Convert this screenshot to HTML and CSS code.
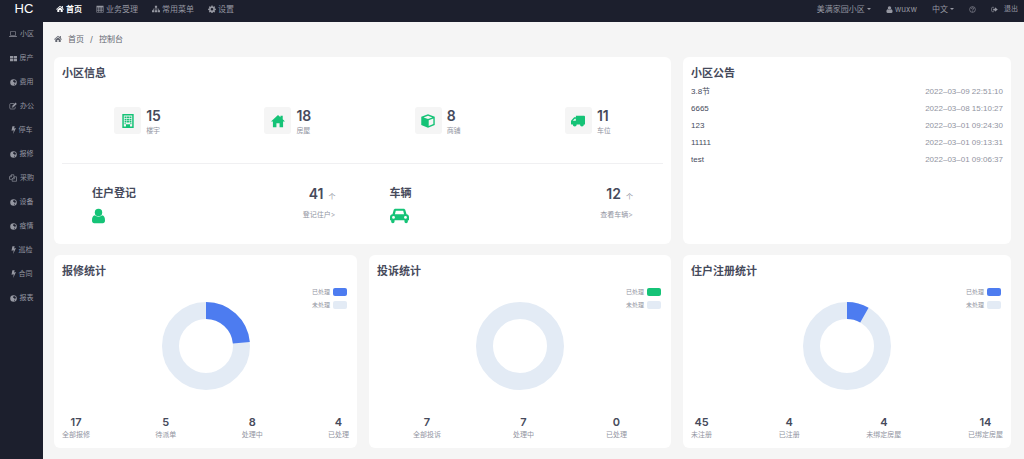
FILE: index.html
```html
<!DOCTYPE html>
<html lang="zh-CN">
<head>
<meta charset="utf-8">
<title>控制台</title>
<link rel="stylesheet" href="styles.css">
</head>
<body>
<svg class="sprite" aria-hidden="true">
  <symbol id="home" viewBox="0 0 16 16"><path d="M8 1.500 0 8.300l1 1.100L8 3.600l7 5.800 1-1.100-2.300-2V2h-2.200v2.400zM8 4.800 2.600 9.200V14h4V10h2.800v4h4V9.200z"/></symbol>
  <symbol id="house" viewBox="0 0 16 16"><path d="M8 1 0 8.600h2.200V15h4V10.500h3.600V15h4V8.600H16l-2.600-2.500V2h-2.600v1.600z"/></symbol>
  <symbol id="calendar" viewBox="0 0 16 16"><path fill-rule="evenodd" d="M1 1.500h14V15H1zM2.200 5v2.400h2.600V5zm3.700 0v2.400h1.800V5zm2.800 0v2.400h1.800V5zm2.800 0v2.400h2.300V5zM2.200 8.400v2.200h2.600V8.400zm3.700 0v2.200h1.800V8.400zm2.800 0v2.200h1.800V8.400zm2.800 0v2.200h2.300V8.400zM2.200 11.600v2.200h2.600v-2.200zm3.700 0v2.200h1.800v-2.200zm2.800 0v2.200h1.800v-2.200zm2.800 0v2.200h2.300v-2.200z"/></symbol>
  <symbol id="sitemap" viewBox="0 0 16 16"><path d="M5.800 1.500h4.400v4H8.600V7.500h5.500v3H16v4h-4.500v-4h1.400V8.700H8.600v1.800h1.700v4H5.700v-4h1.700V8.700H3.100v1.800h1.400v4H0v-4h1.900v-3h5.500v-2H5.800z"/></symbol>
  <symbol id="gear" viewBox="0 0 16 16"><path fill-rule="evenodd" d="M6.800 1h2.400l.4 2 1.400.6 1.700-1.200 1.700 1.700-1.200 1.700.6 1.400 2 .4v2.400l-2 .4-.6 1.400 1.200 1.700-1.700 1.700-1.700-1.200-1.400.6-.4 2H6.800l-.4-2-1.400-.6-1.700 1.200-1.700-1.700 1.200-1.700-.6-1.400-2-.4V7.600l2-.4.6-1.400-1.200-1.700 1.700-1.700L5 3.600 6.400 3zM8 6a2.600 2.600 0 1 0 0 5.200A2.600 2.600 0 0 0 8 6z"/></symbol>
  <symbol id="user" viewBox="1 0 14 16"><circle cx="8" cy="4.300" r="4"/><path d="M4.300 7.200c2.100 2.100 5.300 2.100 7.400 0 2.600.3 3.300 2.800 3.300 5.600 0 1.900-1 3-2.400 3H3.400c-1.400 0-2.400-1.100-2.400-3 0-2.800.7-5.300 3.300-5.600z"/></symbol>
  <symbol id="help" viewBox="0 0 16 16"><circle cx="8" cy="8" r="6.600" fill="none" stroke="currentColor" stroke-width="1.400"/><path d="M5.600 6.400C5.800 3.300 10.600 3.500 10.500 6.200 10.500 7.900 8 7.900 8 9.600" fill="none" stroke="currentColor" stroke-width="1.600"/><path d="M7.100 10.700h1.800v1.700H7.100z"/></symbol>
  <symbol id="logout" viewBox="0 0 16 16"><path d="M6.500 3H3.500C2.200 3 1.500 3.800 1.500 5v6c0 1.200.7 2 2 2h3" fill="none" stroke="currentColor" stroke-width="1.600"/><path d="M5 6h4V2.800L15.500 8 9 13.200V10H5z"/></symbol>
  <symbol id="laptop" viewBox="0 0 16 16"><path fill-rule="evenodd" d="M3.500 2.500h9c.8 0 1.300.5 1.300 1.300V11H2.200V3.800c0-.8.500-1.300 1.300-1.300zM3.400 3.700v6.200h9.200V3.700zM0 11.800h16v.7c0 .7-.8 1.200-1.800 1.200H1.800C.8 13.700 0 13.200 0 12.500z"/></symbol>
  <symbol id="grid" viewBox="0 0 16 16"><path d="M0 2h7.300v5.500H0zm8.700 0H16v5.500H8.700zM0 8.700h7.300v5.500H0zm8.700 0H16v5.500H8.700z"/></symbol>
  <symbol id="globe" viewBox="0 0 16 16"><path fill-rule="evenodd" d="M8 .5a7.500 7.500 0 1 0 0 15 7.500 7.500 0 0 0 0-15zm.8 2 3.400 1.200 1.600 3.100-1 1.400-2.600.3-1.400-1.600-1.800-.8.400-1.900zM9.800 10.800l2-.2-.6 2-1.800 1z"/></symbol>
  <symbol id="edit" viewBox="0 0 16 16"><path d="M10 3H3.500C2.300 3 1.500 3.800 1.500 5v7c0 1.200.8 2 2 2h7c1.200 0 2-.8 2-2V9.500" fill="none" stroke="currentColor" stroke-width="1.300"/><path fill-rule="evenodd" d="m13 1.200 2.600 2.600L8.200 11H5.700V8.500zM7 9v1h1l.7-.7-1-1z"/></symbol>
  <symbol id="bolt" viewBox="3 0 10 16"><path d="M5.800.5h4.600L9 5l4-.8L7.300 16l1.200-7.500-4.500 1z"/></symbol>
  <symbol id="copy" viewBox="0 0 16 16"><path d="M5.200 1.500h4.500v4M5.200 1.500 1 5.500v5.200h4.500M5.200 1.500v4H1M10.700 5.500H15v9H6.300V9.700zm0 0v4.200H6.300" fill="none" stroke="currentColor" stroke-width="1.300"/></symbol>
  <symbol id="building" viewBox="0 0 16 16"><path fill-rule="evenodd" d="M1.500 0h13v16h-13zM3.200 1.800v12.400h2.500v-2.400h4.600v2.400h2.500V1.800z"/><path d="M4.100 2.800h2.200v1.900H4.100zm2.800 0h2.200v1.900H6.900zm2.800 0h2.200v1.900H9.700zM4.100 5.300h2.200v1.900H4.100zm2.800 0h2.200v1.900H6.900zm2.800 0h2.200v1.900H9.700zM4.100 7.800h2.200v1.900H4.100zm2.800 0h2.200v1.900H6.900zm2.800 0h2.200v1.900H9.700zM4.100 10.300h1.200v1.500H4.100zm6.600 0h1.200v1.500h-1.200zM7 12.800h2V15H7z"/></symbol>
  <symbol id="cube" viewBox="0 0 16 16"><path fill-rule="evenodd" d="M8 .4 15.700 3.200v9.300L8 15.800.3 12.500V3.200zM8 2 3 3.900 8 5.800l5-1.900zm.8 5.200v6.500l5.300-2.300V5.200z"/></symbol>
  <symbol id="truck" viewBox="0 0 16 16"><path fill-rule="evenodd" d="M5.600 2H15c.6 0 1 .4 1 1v9h-1.300a2.200 2.200 0 0 1-4.400 0H6.500a2.200 2.200 0 0 1-4.400 0H.5c-.3 0-.5-.2-.5-.5V8.200c0-.5.200-.9.500-1.200l2.600-2.700c.3-.3.700-.5 1.100-.5h1.400zM2 7.800h3.500V5.300H4.400z"/></symbol>
  <symbol id="car" viewBox="0 0 20 16"><path fill-rule="evenodd" d="M5.800.4h8.400c1 0 1.700.6 2 1.500l1.200 4.300c1.500.2 2.600 1.300 2.600 2.800v3.500h-1.200v1.300a1.800 1.800 0 0 1-3.600 0v-1.300H4.800v1.300a1.800 1.800 0 0 1-3.600 0v-1.300H0V9c0-1.500 1.100-2.600 2.600-2.800l1.200-4.300c.3-.9 1-1.500 2-1.500zm.3 2L5.200 6.100h9.600l-.9-3.700zM3.700 8a1.500 1.500 0 1 0 0 3 1.500 1.500 0 0 0 0-3zm12.600 0a1.500 1.500 0 1 0 0 3 1.500 1.500 0 0 0 0-3z"/></symbol>
</svg>

<header class="topbar">
  <a class="logo" href="#">HC</a>
  <nav class="menu">
    <a class="menu-link active" href="#"><svg class="icon"><use href="#home"/></svg>首页</a>
    <a class="menu-link" href="#"><svg class="icon"><use href="#calendar"/></svg>业务受理</a>
    <a class="menu-link" href="#"><svg class="icon"><use href="#sitemap"/></svg>常用菜单</a>
    <a class="menu-link" href="#"><svg class="icon"><use href="#gear"/></svg>设置</a>
  </nav>
  <div class="tools">
    <button class="tool" type="button">美满家园小区<span class="caret"></span></button>
    <a class="tool" href="#"><svg class="icon small"><use href="#user"/></svg>wuxw</a>
    <button class="tool" type="button">中文<span class="caret"></span></button>
    <a class="tool" href="#" aria-label="帮助"><svg class="icon small"><use href="#help"/></svg></a>
    <a class="tool spaced" href="#"><svg class="icon small"><use href="#logout"/></svg>退出</a>
  </div>
</header>

<div class="shell">
  <nav class="sidebar">
    <a href="#"><svg class="icon"><use href="#laptop"/></svg>小区</a>
    <a href="#"><svg class="icon small"><use href="#grid"/></svg>房产</a>
    <a href="#"><svg class="icon small"><use href="#globe"/></svg>费用</a>
    <a href="#"><svg class="icon"><use href="#edit"/></svg>办公</a>
    <a href="#"><svg class="icon narrow"><use href="#bolt"/></svg>停车</a>
    <a href="#"><svg class="icon small"><use href="#globe"/></svg>报修</a>
    <a href="#"><svg class="icon"><use href="#copy"/></svg>采购</a>
    <a href="#"><svg class="icon small"><use href="#globe"/></svg>设备</a>
    <a href="#"><svg class="icon small"><use href="#globe"/></svg>疫情</a>
    <a href="#"><svg class="icon narrow"><use href="#bolt"/></svg>巡检</a>
    <a href="#"><svg class="icon narrow"><use href="#bolt"/></svg>合同</a>
    <a href="#"><svg class="icon small"><use href="#globe"/></svg>报表</a>
  </nav>

  <main class="main">
    <nav class="breadcrumb">
      <svg class="icon"><use href="#home"/></svg><a href="#">首页</a><span>/</span><span>控制台</span>
    </nav>

    <div class="board">
      <section class="card wide">
        <h2>小区信息</h2>
        <div class="facts">
          <div class="fact"><span class="tile"><svg class="icon"><use href="#building"/></svg></span><div><strong>15</strong><small>楼宇</small></div></div>
          <div class="fact"><span class="tile"><svg class="icon"><use href="#house"/></svg></span><div><strong>18</strong><small>房屋</small></div></div>
          <div class="fact"><span class="tile"><svg class="icon"><use href="#cube"/></svg></span><div><strong>8</strong><small>商铺</small></div></div>
          <div class="fact"><span class="tile"><svg class="icon"><use href="#truck"/></svg></span><div><strong>11</strong><small>车位</small></div></div>
        </div>
        <div class="records">
          <div class="record">
            <div><h3>住户登记</h3><svg class="badge"><use href="#user"/></svg></div>
            <div class="record-end"><p><strong>41</strong>个</p><a href="#">登记住户&gt;</a></div>
          </div>
          <div class="record">
            <div><h3>车辆</h3><svg class="badge car"><use href="#car"/></svg></div>
            <div class="record-end"><p><strong>12</strong>个</p><a href="#">查看车辆&gt;</a></div>
          </div>
        </div>
      </section>

      <section class="card">
        <h2>小区公告</h2>
        <ul class="notices">
          <li><span>3.8节</span><time>2022–03–09 22:51:10</time></li>
          <li><span>6665</span><time>2022–03–08 15:10:27</time></li>
          <li><span>123</span><time>2022–03–01 09:24:30</time></li>
          <li><span>11111</span><time>2022–03–01 09:13:31</time></li>
          <li><span>test</span><time>2022–03–01 09:06:37</time></li>
        </ul>
      </section>

      <section class="card">
        <h2>报修统计</h2>
        <div class="chart">
          <svg class="donut" viewBox="0 0 88 88"><circle class="rest" cx="44" cy="44" r="35.500"/><circle class="done" cx="44" cy="44" r="35.500" pathLength="17" stroke-dasharray="4 13" transform="rotate(-90 44 44)"/></svg>
          <ul class="legend"><li>已处理<i class="blue"></i></li><li>未处理<i></i></li></ul>
        </div>
        <dl class="totals">
          <div><dt>全部报修</dt><dd>17</dd></div><div><dt>待派单</dt><dd>5</dd></div><div><dt>处理中</dt><dd>8</dd></div><div><dt>已处理</dt><dd>4</dd></div>
        </dl>
      </section>

      <section class="card">
        <h2>投诉统计</h2>
        <div class="chart">
          <svg class="donut" viewBox="0 0 88 88"><circle class="rest" cx="44" cy="44" r="35.500"/></svg>
          <ul class="legend"><li>已处理<i class="green"></i></li><li>未处理<i></i></li></ul>
        </div>
        <dl class="totals around">
          <div><dt>全部投诉</dt><dd>7</dd></div><div><dt>处理中</dt><dd>7</dd></div><div><dt>已处理</dt><dd>0</dd></div>
        </dl>
      </section>

      <section class="card">
        <h2>住户注册统计</h2>
        <div class="chart">
          <svg class="donut" viewBox="0 0 88 88"><circle class="rest" cx="44" cy="44" r="35.500"/><circle class="done" cx="44" cy="44" r="35.500" pathLength="49" stroke-dasharray="4 45" transform="rotate(-90 44 44)"/></svg>
          <ul class="legend"><li>已处理<i class="blue"></i></li><li>未处理<i></i></li></ul>
        </div>
        <dl class="totals">
          <div><dt>未注册</dt><dd>45</dd></div><div><dt>已注册</dt><dd>4</dd></div><div><dt>未绑定房屋</dt><dd>4</dd></div><div><dt>已绑定房屋</dt><dd>14</dd></div>
        </dl>
      </section>
    </div>
  </main>
</div>
</body>
</html>
```
FILE: styles.css
```css
:root {
  --dark: #1c1f2d;
  --page: #f5f5f5;
  --ink: #464a5b;
  --muted: #9194a1;
  --green: #15c377;
  --blue: #4d7cf0;
  --pale: #e3ebf5;
}

* { box-sizing: border-box; }

body {
  margin: 0;
  min-height: 100vh;
  display: flex;
  flex-direction: column;
  background: var(--page);
  color: var(--ink);
  font: 8px/12px Inter, "Noto Sans CJK SC", sans-serif;
}

h2, h3, p, ul, dl, dd { margin: 0; padding: 0; }
ul { list-style: none; }
a { color: inherit; text-decoration: none; }
button { border: 0; padding: 0; background: none; color: inherit; font: inherit; cursor: pointer; }
svg { display: block; fill: currentColor; }

.sprite { display: none; }
.icon { width: 8px; height: 8px; flex: none; }
.icon.small { width: 7px; height: 7px; }
.icon.narrow { width: 5px; }

.topbar {
  display: flex;
  align-items: center;
  height: 22px;
  padding: 0 6px 4px 0;
  background: var(--dark);
  color: #9597a1;
}
.logo {
  width: 43px;
  padding-left: 5px;
  text-align: center;
  color: #fff;
  font: 13px/16px "Liberation Sans", sans-serif;
}
.menu { display: flex; gap: 14px; padding-left: 13px; }
.menu-link { display: flex; align-items: center; gap: 2px; }
.menu-link.active { color: #fff; font-weight: 700; }
.tools { display: flex; align-items: center; gap: 15px; margin-left: auto; font-size: 7px; }
.tool { display: flex; align-items: center; gap: 2px; }
.tool:nth-child(-n+3) { font-size: 8px; line-height: 12px; }
.tool.spaced { gap: 6px; }
.caret { border: 2px solid transparent; border-top-color: currentColor; border-bottom: 0; }

.shell { display: flex; flex: 1; }
.sidebar {
  width: 43px;
  flex: none;
  background: var(--dark);
  color: #9597a1;
  font-size: 7px;
  line-height: 24px;
}
.sidebar a { display: flex; align-items: center; justify-content: center; gap: 3px; min-height: 24px; }

.main { flex: 1; min-width: 0; padding: 11px 13px 11px 11px; }
.breadcrumb { display: flex; align-items: center; gap: 6px; margin-bottom: 12px; color: #62656f; }

.board {
  display: grid;
  grid-template-columns: 303fr 302fr 328fr;
  gap: 11px 12px;
}
.card { padding: 9px 8px 8px; border-radius: 6px; background: #fff; }
.card.wide { grid-column: span 2; }
.card h2, .card h3 { font-size: 11px; line-height: 15px; font-weight: 700; }

.facts {
  display: grid;
  grid-template-columns: repeat(4, 1fr);
  padding: 26px 0;
  border-bottom: 1px solid #f0f0f2;
}
.fact { display: flex; justify-content: center; gap: 5px; }
.fact strong { display: block; font-size: 14px; line-height: 18px; font-weight: 600; }
.fact small { display: block; font-size: 7px; line-height: 12px; color: var(--muted); }
.fact div { width: 14px; }
.tile {
  display: flex;
  align-items: center;
  justify-content: center;
  width: 27px;
  height: 27px;
  border-radius: 3px;
  background: var(--page);
  color: var(--green);
}
.tile .icon { width: 14px; height: 14px; }

.records { display: flex; gap: 54px; padding: 22px 30px 12px; }
.record { display: flex; justify-content: space-between; flex: 1; }
.badge { width: 13px; height: 16px; margin-top: 7px; color: var(--green); }
.badge.car { width: 19px; }
.record-end { display: flex; flex-direction: column; align-items: flex-end; gap: 8px; font-size: 7px; line-height: 12px; color: var(--muted); }
.record-end p { display: flex; align-items: baseline; gap: 5px; height: 15px; line-height: 15px; }
.record-end strong { font-size: 14px; font-weight: 600; color: var(--ink); }

.notices { padding-top: 2px; font-family: "Liberation Sans", "Noto Sans CJK SC", sans-serif; }
.notices li { display: flex; justify-content: space-between; line-height: 17px; }
.notices time { color: var(--muted); }

.chart { position: relative; padding: 23px 0 25px; }
.donut { width: 88px; height: 88px; margin: 0 auto; fill: none; stroke-width: 17; }
.rest { stroke: var(--pale); }
.done { stroke: var(--blue); }
.legend { position: absolute; top: 6px; right: 2px; font-size: 6px; line-height: 13px; color: var(--muted); }
.legend li { display: flex; align-items: center; gap: 3px; }
.legend i { width: 14px; height: 8px; border-radius: 2px; background: var(--pale); }
.legend .blue { background: var(--blue); }
.legend .green { background: var(--green); }

.totals { display: flex; justify-content: space-between; text-align: center; }
.totals.around { justify-content: space-around; }
.totals div { display: flex; flex-direction: column-reverse; }
.totals dt { font-size: 7px; line-height: 11px; color: var(--muted); }
.totals dd { font-size: 11px; line-height: 14px; font-weight: 600; }
```
